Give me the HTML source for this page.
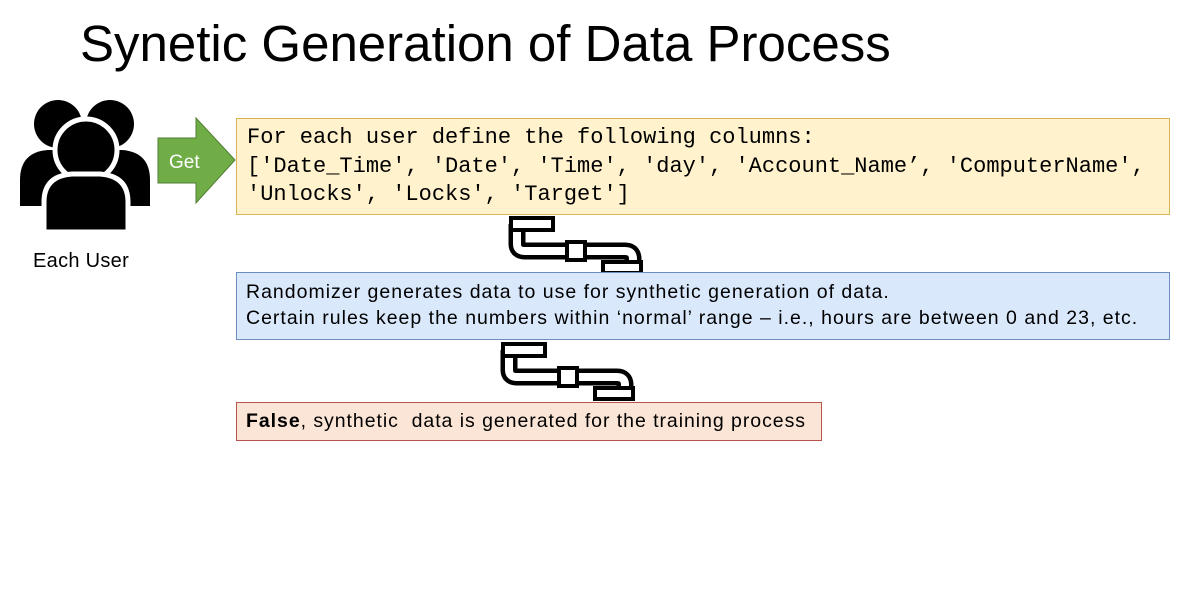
<!DOCTYPE html>
<html><head><style>
body{margin:0;width:1191px;height:590px;background:#fff;position:relative;overflow:hidden;font-family:"Liberation Sans",sans-serif}
.t{position:absolute;left:80px;top:14px;font-size:51px;color:#000;white-space:nowrap;letter-spacing:0px}
.box{position:absolute;box-sizing:border-box}
.y{left:236px;top:118px;width:934px;height:97px;background:#fff2cc;border:1px solid #d6b656;font-family:"Liberation Mono",monospace;font-size:22px;line-height:28.5px;padding:5px 0 0 10px;white-space:nowrap}
.b{left:236px;top:272px;width:934px;height:68px;background:#dae8fc;border:1px solid #6c8ebf;font-size:19.5px;line-height:26px;padding:6px 0 0 9px;white-space:nowrap;letter-spacing:1px}
.r{left:236px;top:402px;width:586px;height:39px;background:#fbe5d6;border:1px solid #b85450;font-size:19.5px;line-height:26px;padding:5px 0 0 9px;white-space:nowrap;letter-spacing:0.95px}
.eu{position:absolute;left:33px;top:250px;font-size:20px;letter-spacing:0.3px}
</style></head><body>
<div class="t">Synetic Generation of Data Process</div>
<svg style="position:absolute;left:0;top:90px" width="240" height="145">
<circle cx="58" cy="34" r="24" fill="#000"/><circle cx="110" cy="34" r="24" fill="#000"/>
<path d="M20 116 V90 Q20 62 48 60 H122 Q150 62 150 90 V116 Z" fill="#000"/>
<circle cx="86" cy="60" r="31" fill="#000" stroke="#fff" stroke-width="5"/>
<path d="M44 142 V112 Q44 86 72 84 H100 Q128 86 128 112 V142 Z" fill="#000" stroke="#fff" stroke-width="5"/>
<path d="M158 48 H196 V28 L235 70 L196 113 V93 H158 Z" fill="#70ad47" stroke="#507e32" stroke-width="1"/>
<text x="169" y="78" font-family="Liberation Sans" font-size="19" fill="#fff">Get</text>
</svg>
<div class="eu">Each User</div>
<div class="box y">For each user define the following columns:<br>['Date_Time', 'Date', 'Time', 'day', 'Account_Name’, 'ComputerName',<br>'Unlocks', 'Locks', 'Target']</div>
<svg style="position:absolute;left:505px;top:214px" width="145" height="62">
<g fill="none" stroke="#000" stroke-width="4">
<path d="M12 10 V30 Q12 37 20 37 H120 Q128 37 128 45 V52" stroke-width="17"/>
<path d="M12 10 V30 Q12 37 20 37 H120 Q128 37 128 45 V52" stroke="#fff" stroke-width="8"/>
<rect x="6" y="4" width="42" height="12" fill="#fff"/>
<rect x="62" y="28" width="18" height="18" fill="#fff"/>
<rect x="98" y="48" width="38" height="11" fill="#fff"/>
</g></svg>
<div class="box b">Randomizer generates data to use for synthetic generation of data.<br>Certain rules keep the numbers within ‘normal’ range – i.e., hours are between 0 and 23, etc.</div>
<svg style="position:absolute;left:497px;top:340px" width="145" height="62">
<g fill="none" stroke="#000" stroke-width="4">
<path d="M12 10 V30 Q12 37 20 37 H120 Q128 37 128 45 V52" stroke-width="17"/>
<path d="M12 10 V30 Q12 37 20 37 H120 Q128 37 128 45 V52" stroke="#fff" stroke-width="8"/>
<rect x="6" y="4" width="42" height="12" fill="#fff"/>
<rect x="62" y="28" width="18" height="18" fill="#fff"/>
<rect x="98" y="48" width="38" height="11" fill="#fff"/>
</g></svg>
<div class="box r"><b>False</b>, synthetic&nbsp; data is generated for the training process</div>
</body></html>
